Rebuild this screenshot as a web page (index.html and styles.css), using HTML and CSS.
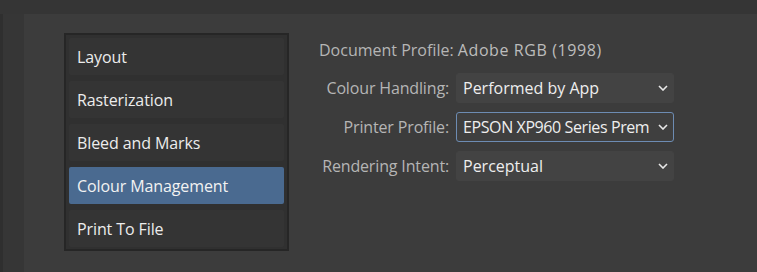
FILE: index.html
```html
<!DOCTYPE html>
<html>
<head>
<meta charset="utf-8">
<link rel="stylesheet" href="styles.css">
</head>
<body>
<div class="topbar"></div>
<div class="main">
  <div class="leftstrip"></div>
  <div class="content">
    <div class="list">
      <div class="item">Layout</div>
      <div class="item">Rasterization</div>
      <div class="item">Bleed and Marks</div>
      <div class="item selected">Colour Management</div>
      <div class="item">Print To File</div>
    </div>
    <div class="form">
      <div class="docrow"><span class="label">Document Profile:</span> <span class="value">Adobe RGB (1998)</span></div>
      <div class="label cell">Colour Handling:</div>
      <div class="select"><span class="seltext">Performed by App</span><svg class="chev" width="10" height="6" viewBox="0 0 10 6"><polyline points="1,1 5,5 9,1" fill="none" stroke="#e8e8e8" stroke-width="1.6"/></svg></div>
      <div class="label cell">Printer Profile:</div>
      <div class="select focused"><span class="seltext tight">EPSON XP960 Series Prem</span><svg class="chev" width="10" height="6" viewBox="0 0 10 6"><polyline points="1,1 5,5 9,1" fill="none" stroke="#e8e8e8" stroke-width="1.6"/></svg></div>
      <div class="label cell">Rendering Intent:</div>
      <div class="select"><span class="seltext">Perceptual</span><svg class="chev" width="10" height="6" viewBox="0 0 10 6"><polyline points="1,1 5,5 9,1" fill="none" stroke="#e8e8e8" stroke-width="1.6"/></svg></div>
    </div>
  </div>
</div>
</body>
</html>
```

FILE: styles.css
```css
html, body {
  margin: 0;
  padding: 0;
  width: 757px;
  height: 272px;
  overflow: hidden;
  background: #3c3c3c;
  font-family: "Open Sans", "Noto Sans", sans-serif;
  font-size: 16px;
}
.topbar {
  height: 14px;
  background: #353535;
}
.main {
  display: flex;
  height: 258px;
}
.leftstrip {
  width: 21px;
  border-left: 3px solid #2f2f2f;
  background: #363636;
}
.content {
  display: flex;
  padding-top: 19px;
  padding-left: 40px;
  gap: 30px;
  align-items: flex-start;
}
.list {
  box-sizing: border-box;
  width: 225px;
  height: 218px;
  border: 2px solid #262626;
  background: #303030;
  padding: 3px 3px 2px 3px;
  display: flex;
  flex-direction: column;
  gap: 6px;
}
.item {
  height: 37px;
  display: flex;
  align-items: center;
  padding-left: 8px;
  padding-top: 1px;
  box-sizing: border-box;
  color: #ececec;
  background: #343434;
  border-radius: 2px;
  white-space: nowrap;
  letter-spacing: -0.1px;
}
.item.selected {
  background: #4a6a90;
  color: #f2f2f2;
}
.form {
  display: grid;
  grid-template-columns: 130px 218px;
  column-gap: 7px;
  row-gap: 9px;
  align-items: center;
  padding-top: 6px;
}
.docrow {
  grid-column: 1 / 3;
  height: 22px;
  line-height: 22px;
  white-space: nowrap;
  margin-bottom: 3px;
}
.label {
  color: #b5b5b5;
}
.cell {
  text-align: right;
  white-space: nowrap;
  letter-spacing: -0.15px;
}
.value {
  color: #bdbdbd;
  letter-spacing: 0.6px;
}
.select {
  box-sizing: border-box;
  height: 30px;
  background: #434343;
  border: 1px solid #434343;
  border-radius: 3px;
  display: flex;
  align-items: center;
  padding-left: 6px;
  padding-right: 5px;
  gap: 1px;
  color: #eeeeee;
}
.select.focused {
  border-color: #6d8cb3;
  background: #3f3f3f;
}
.seltext {
  flex: 1;
  overflow: hidden;
  white-space: nowrap;
}
.seltext.tight {
  letter-spacing: -0.4px;
}
.chev {
  flex: none;
}
```
